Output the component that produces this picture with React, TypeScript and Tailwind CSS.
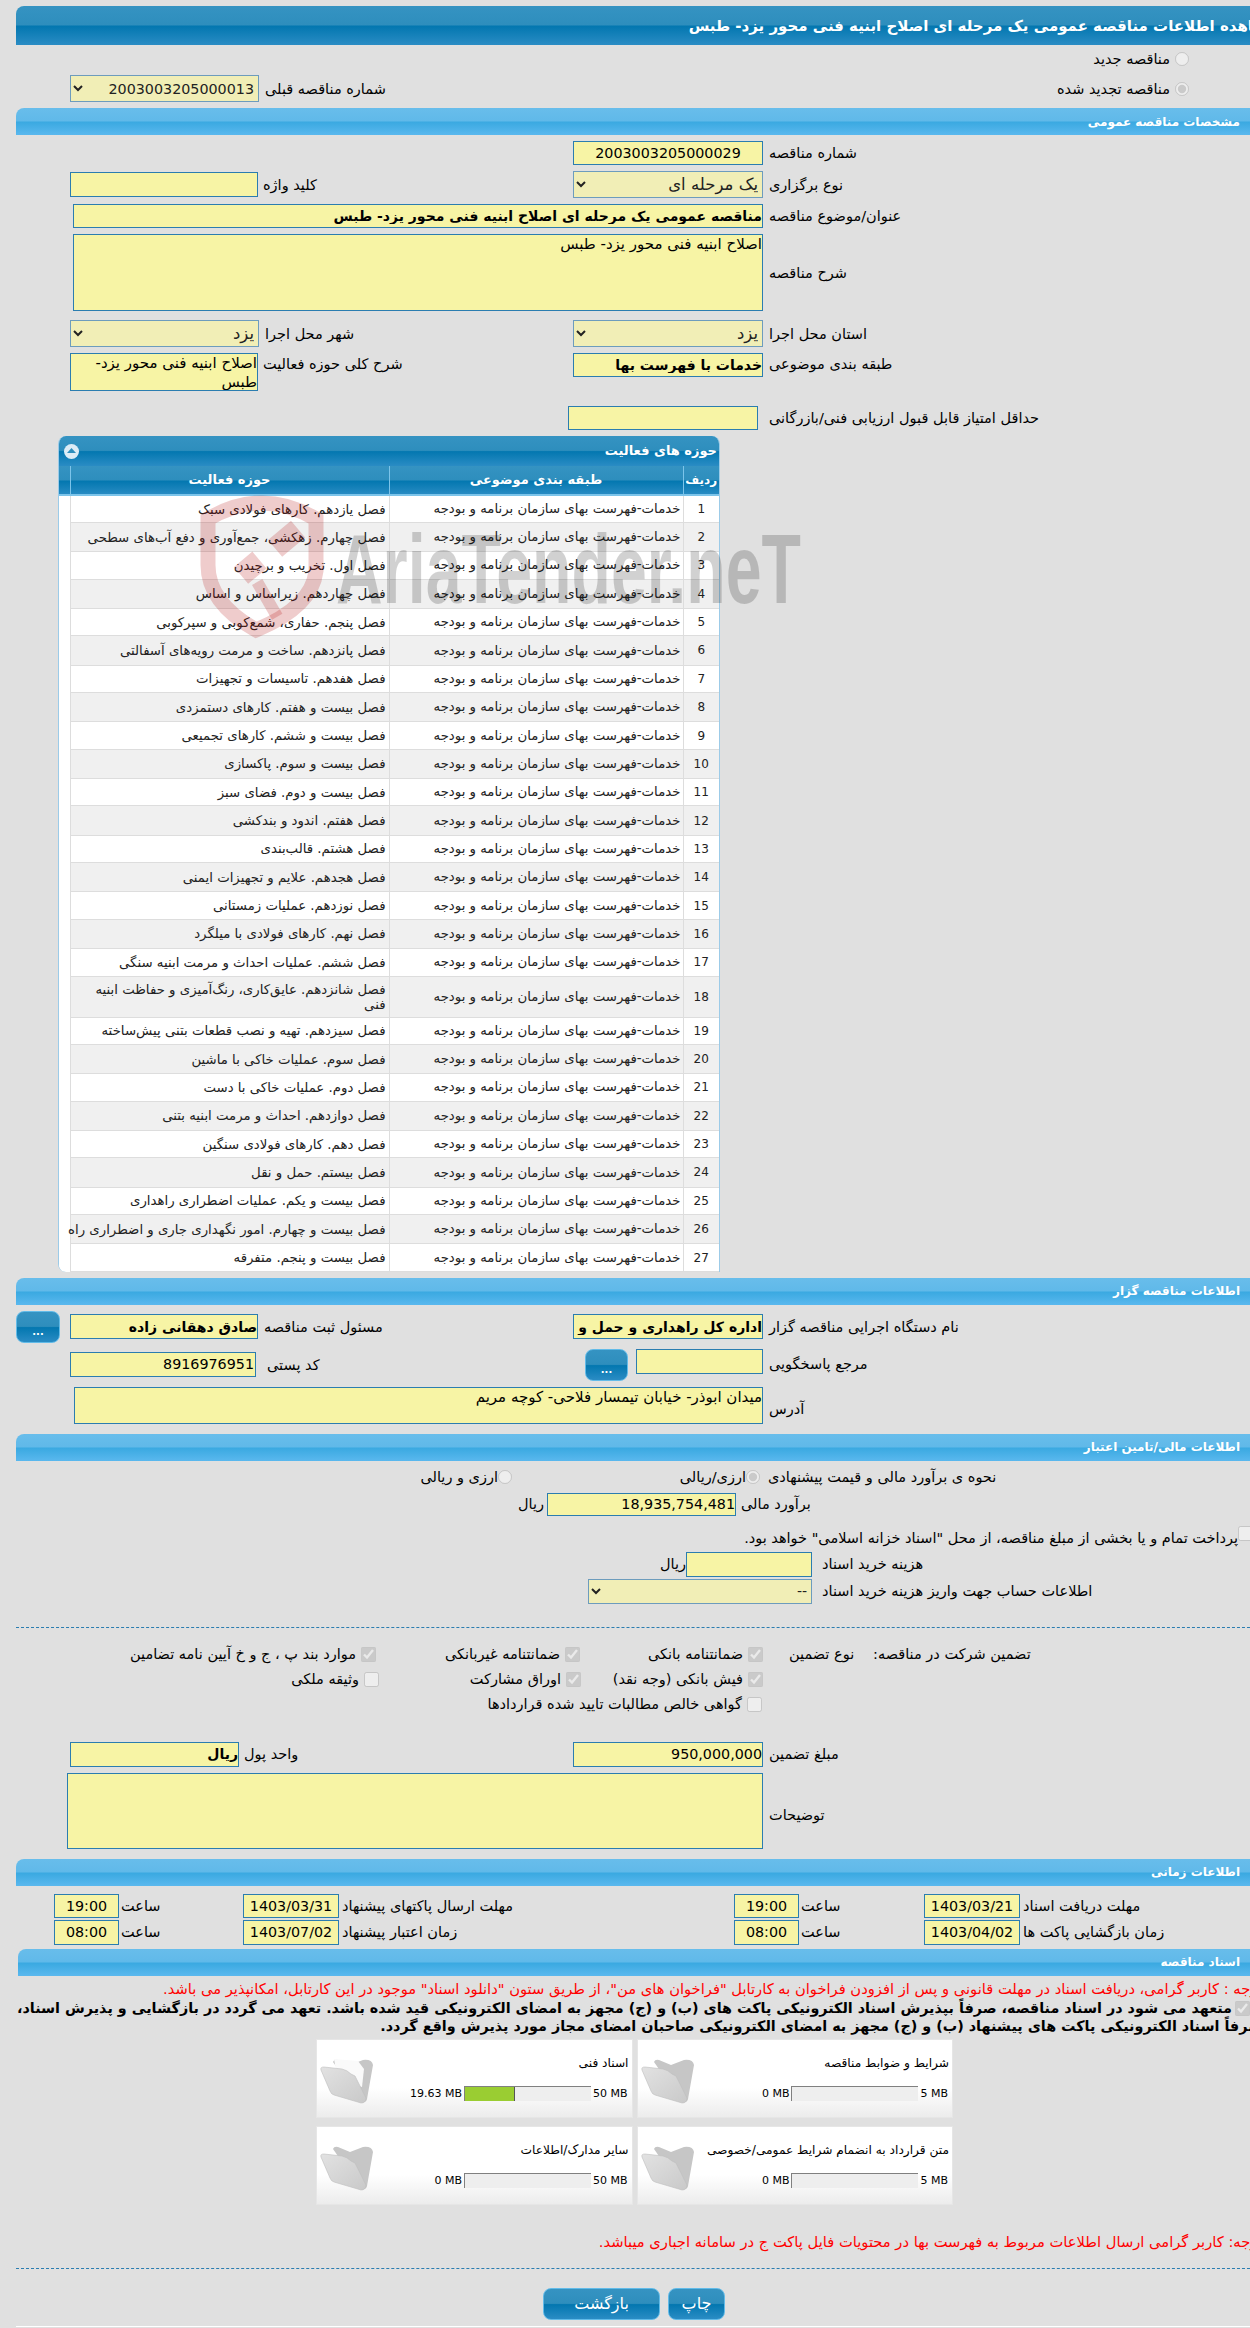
import React from 'react';

const darkBar = 'bg-[linear-gradient(to_bottom,#3593c2_0%,#2e8ebd_48%,#0377b0_52%,#2a8cc4_100%)]';
const lightBar = 'bg-[linear-gradient(to_bottom,#68bdeb_0%,#60b9e9_48%,#3aa9e1_52%,#5ab8ee_100%)]';
const field = 'border border-[#2b7db0] bg-[#f7f4a5] text-black outline-none';

const activities = [
    'فصل یازدهم. کارهای فولادی سبک',
    'فصل چهارم. زهکشی، جمع‌آوری و دفع آب‌های سطحی',
    'فصل اول. تخریب و برچیدن',
    'فصل چهاردهم. زیراساس و اساس',
    'فصل پنجم. حفاری، شمع‌کوبی و سپرکوبی',
    'فصل پانزدهم. ساخت و مرمت رویه‌های آسفالتی',
    'فصل هفدهم. تاسیسات و تجهیزات',
    'فصل بیست و هفتم. کارهای دستمزدی',
    'فصل بیست و ششم. کارهای تجمیعی',
    'فصل بیست و سوم. پاکسازی',
    'فصل بیست و دوم. فضای سبز',
    'فصل هفتم. اندود و بندکشی',
    'فصل هشتم. قالب‌بندی',
    'فصل هجدهم. علایم و تجهیزات ایمنی',
    'فصل نوزدهم. عملیات زمستانی',
    'فصل نهم. کارهای فولادی با میلگرد',
    'فصل ششم. عملیات احداث و مرمت ابنیه سنگی',
    'فصل شانزدهم. عایق‌کاری، رنگ‌آمیزی و حفاظت ابنیه فنی',
    'فصل سیزدهم. تهیه و نصب قطعات بتنی پیش‌ساخته',
    'فصل سوم. عملیات خاکی با ماشین',
    'فصل دوم. عملیات خاکی با دست',
    'فصل دوازدهم. احداث و مرمت ابنیه بتنی',
    'فصل دهم. کارهای فولادی سنگین',
    'فصل بیستم. حمل و نقل',
    'فصل بیست و یکم. عملیات اضطراری راهداری',
    'فصل بیست و چهارم. امور نگهداری جاری و اضطراری راه',
    'فصل بیست و پنجم. متفرقه',
];

const SectionBar = ({ title, className }: { title: string; className: string }) => (
    <div className={`${lightBar} ${className} flex items-center justify-end rounded-tl-lg rounded-tr-lg pr-[30px] text-[12px] font-bold text-white`} dir="ltr">
        <span dir="rtl">{title}</span>
    </div>
);

const Label = ({ children, className }: { children: React.ReactNode; className: string }) => (
    <span dir="rtl" className={`${className} block shrink-0 whitespace-nowrap text-left text-[14.5px] leading-[18px] text-black`}>
        {children}
    </span>
);

const TextBox = ({ value, className }: { value: string; className: string }) => (
    <input readOnly dir="rtl" value={value} className={`${field} ${className} block shrink-0 px-0`} />
);

const Area = ({ value, className }: { value: string; className: string }) => (
    <textarea readOnly dir="rtl" value={value} className={`${field} ${className} block shrink-0 resize-none p-0 text-[15px] leading-[19px]`} />
);

const Pick = ({ value, className }: { value: string; className: string }) => (
    <select disabled dir="rtl" value={value} onChange={() => undefined} className={`${className} block shrink-0 border border-[#6d9cbd] bg-[#f1eeb6] text-[#222222] outline-none`}>
        <option value={value}>{value}</option>
    </select>
);

const Check = ({ checked, className }: { checked?: boolean; className?: string }) => (
    <input type="checkbox" disabled readOnly checked={!!checked} className={`block h-[15px] w-[15px] shrink-0 ${className ?? ''}`} />
);

const Radio = ({ checked }: { checked?: boolean }) => (
    <input type="radio" disabled readOnly checked={!!checked} className="block h-[14px] w-[14px] shrink-0" />
);

const DotsButton = ({ className }: { className: string }) => (
    <button className={`${darkBar} ${className} flex shrink-0 items-end justify-center rounded-lg border border-[#62bbe8] pb-[5px] text-[10px] font-bold leading-[10px] text-white`}>
        ...
    </button>
);

const Folder = ({ open }: { open?: boolean }) => (
    <svg width="56" height="48" viewBox="0 0 56 48" className="mt-[17px] ml-[3px] shrink-0">
        <defs>
            <linearGradient id="folderFront" x1="0" y1="0" x2="1" y2="1">
                <stop offset="0" stopColor="#e2e2e2" />
                <stop offset="1" stopColor="#c9c9c9" />
            </linearGradient>
        </defs>
        <path d="M13 5 Q14 2 18 3 L30 8 L43 3 Q52 2 53 8 L47 42 Q46 46 41 45 Z" fill="#c6c6c6" />
        {open && <path d="M14 2 L38 4 L44 12 L42 30 L18 24 Z" fill="#fafafa" />}
        <path d="M1 13 Q0 10 4 10 L22 12 Q27 13 31 17 L35 19 L46 41 Q46 46 41 46 L14 38 Q11 37 10 34 Z" fill="url(#folderFront)" stroke="#bdbdbd" strokeWidth="0.6" />
    </svg>
);

const DocCard = ({ title, max, used, percent, open }: { title: string; max: string; used: string; percent: number; open?: boolean }) => (
    <div className="flex h-[79px] border border-[#e6e6e6] bg-[linear-gradient(to_bottom,#ffffff_0%,#ffffff_62%,#ececec_100%)]" dir="ltr">
        <Folder open={open} />
        <div className="flex flex-1 flex-col items-end pr-[3px]">
            <span dir="rtl" className="mt-[15px] h-[16px] text-[12.2px] leading-[16px] whitespace-nowrap text-black">{title}</span>
            <div className="mt-[15px] flex h-[15px] items-center text-[11px] leading-[15px] text-black">
                <span className="mr-[2px]">{used}</span>
                <div className="h-[15px] w-[127px] border-t border-l border-[#808080] bg-[#eeeeee]">
                    {percent > 0 && <div className="h-full border-r border-[#555555] bg-[#9acd32]" style={{ width: `${percent}%` }} />}
                </div>
                <span className="ml-[2px] mr-[1px]">{max}</span>
            </div>
        </div>
    </div>
);

const Watermark = () => (
    <svg width="620" height="150" viewBox="0 0 620 150" className="pointer-events-none absolute top-[495px] left-[190px]">
        <path d="M18 24 Q72 -8 126 24 L126 76 Q122 112 66 135 Q18 108 18 70 Z" fill="none" stroke="#b00000" strokeOpacity="0.2" strokeWidth="15" />
        <rect x="78" y="45" width="30" height="22" transform="rotate(-40 78 45)" fill="#b00000" fillOpacity="0.2" />
        <rect x="44" y="72" width="24" height="22" transform="rotate(-40 44 72)" fill="#b00000" fillOpacity="0.2" />
        <rect x="62" y="90" width="12" height="40" transform="rotate(-30 62 90)" fill="#b00000" fillOpacity="0.2" />
        <text x="146" y="108" textLength="465" lengthAdjust="spacingAndGlyphs" fontFamily="'Liberation Sans', sans-serif" fontWeight="700" fontSize="98" fill="#000000" fillOpacity="0.18">
            AriaTender.neT
        </text>
    </svg>
);

export default function App() {
    return (
        <div dir="ltr" className="relative h-[2328px] w-[1250px] overflow-hidden bg-[#e0e0e0] font-['DejaVu_Sans',sans-serif] text-[12px] text-black">
            <div className="w-[1270px]">
                <div className={`${darkBar} mt-[6px] ml-[16px] flex h-[39px] w-[1262px] items-center justify-end rounded-tl-lg rounded-tr-lg pt-[1px] text-[15px] font-bold whitespace-nowrap text-white`}>
                    <span dir="rtl">مشاهده اطلاعات مناقصه عمومی یک مرحله ای اصلاح ابنیه فنی محور یزد- طبس</span>
                </div>

                <div className="mt-[6px] flex h-[15px] items-center justify-end gap-[5px] pr-[81px]">
                    <Label className="">مناقصه جدید</Label>
                    <Radio />
                </div>
                <div className="mt-[9px] flex h-[27px] items-center">
                    <Pick value="2003003205000013" className="ml-[70px] h-[27px] w-[189px] text-[14.3px]" />
                    <Label className="ml-[6px] w-[200px]">شماره مناقصه قبلی</Label>
                    <span className="flex-1" />
                    <Label className="mr-[5px]">مناقصه تجدید شده</Label>
                    <span className="mr-[81px]"><Radio checked /></span>
                </div>

                <SectionBar title="مشخصات مناقصه عمومی" className="mt-[6px] ml-[16px] h-[27px]" />

                <div className="mt-[6px] flex h-[24px] items-center">
                    <TextBox value="2003003205000029" className="ml-[573px] h-[24px] w-[190px] text-center text-[14.3px]" />
                    <Label className="ml-[6px]">شماره مناقصه</Label>
                </div>
                <div className="mt-[6px] flex h-[27px] items-center">
                    <TextBox value="" className="ml-[70px] h-[25px] w-[188px]" />
                    <Label className="ml-[5px] w-[310px]">کلید واژه</Label>
                    <Pick value="یک مرحله ای" className="h-[27px] w-[190px] text-[16.5px]" />
                    <Label className="ml-[6px]">نوع برگزاری</Label>
                </div>
                <div className="mt-[6px] flex h-[24px] items-center">
                    <TextBox value="مناقصه عمومی یک مرحله ای اصلاح ابنیه فنی محور یزد- طبس" className="ml-[73px] h-[24px] w-[690px] text-[14px] font-bold" />
                    <Label className="ml-[6px]">عنوان/موضوع مناقصه</Label>
                </div>
                <div className="mt-[6px] flex h-[77px] items-center">
                    <Area value="اصلاح ابنیه فنی محور یزد- طبس" className="ml-[73px] h-[77px] w-[690px]" />
                    <Label className="ml-[6px]">شرح مناقصه</Label>
                </div>
                <div className="mt-[9px] flex h-[27px] items-center">
                    <Pick value="یزد" className="ml-[70px] h-[27px] w-[189px] text-[16.5px]" />
                    <Label className="ml-[6px] w-[308px]">شهر محل اجرا</Label>
                    <Pick value="یزد" className="h-[27px] w-[190px] text-[16.5px]" />
                    <Label className="ml-[6px]">استان محل اجرا</Label>
                </div>
                <div className="mt-[6px] flex h-[38px] items-start">
                    <Area value="اصلاح ابنیه فنی محور یزد- طبس" className="ml-[70px] h-[38px] w-[188px]" />
                    <Label className="ml-[5px] mt-[2px] w-[310px]">شرح کلی حوزه فعالیت</Label>
                    <TextBox value="خدمات با فهرست بها" className="h-[24px] w-[190px] text-[14px] font-bold" />
                    <Label className="ml-[6px] mt-[2px]">طبقه بندی موضوعی</Label>
                </div>
                <div className="mt-[15px] flex h-[24px] items-center">
                    <TextBox value="" className="ml-[568px] h-[24px] w-[190px]" />
                    <Label className="ml-[11px]">حداقل امتیاز قابل قبول ارزیابی فنی/بازرگانی</Label>
                </div>

                <div className="mt-[6px] ml-[58px] w-[662px] overflow-hidden rounded-tl-lg rounded-tr-lg rounded-bl-lg border-r border-l border-[#9ccbe8] bg-white">
                    <div className={`${darkBar} flex h-[30px] items-center justify-between pr-[2px] pl-[5px] text-[13px] font-bold text-white`}>
                        <span className="flex h-[15px] w-[15px] items-center justify-center rounded-full bg-[#dcecf6]">
                            <svg width="9" height="6" viewBox="0 0 9 6"><path d="M4.5 0 L9 5 L0 5 Z" fill="#2e8ebd" /></svg>
                        </span>
                        <span dir="rtl">حوزه های فعالیت</span>
                    </div>
                    <table className="w-[660px] table-fixed border-collapse">
                        <colgroup>
                            <col className="w-[11px]" />
                            <col className="w-[319px]" />
                            <col className="w-[294px]" />
                            <col className="w-[36px]" />
                        </colgroup>
                        <thead>
                            <tr className={`${darkBar} h-[29px] text-[13px] font-bold text-white`}>
                                <th className="border-r border-b-2 border-[#7cc4ea]" />
                                <th dir="rtl" className="border-r border-b-2 border-[#7cc4ea] font-bold">حوزه فعالیت</th>
                                <th dir="rtl" className="border-r border-b-2 border-[#7cc4ea] font-bold">طبقه بندی موضوعی</th>
                                <th dir="rtl" className="border-b-2 border-[#7cc4ea] text-[12px] font-bold">ردیف</th>
                            </tr>
                        </thead>
                        <tbody>
                            {activities.map((text, i) => (
                                <tr key={i} className={i === 17 ? 'h-[41px] bg-[#f0f0f0]' : i % 2 === 0 ? 'h-[27.5px] bg-white' : 'h-[29.2px] bg-[#f0f0f0]'}>
                                    <td className="bg-white" />
                                    <td dir="rtl" className={`border-b border-l border-[#dddddd] pr-[3px] text-[13.3px] leading-[15px] text-[#222222] ${i === 17 ? '' : 'whitespace-nowrap'}`}>{text}</td>
                                    <td dir="rtl" className="border-b border-l border-[#dddddd] pr-[2px] text-[13.3px] whitespace-nowrap text-[#222222]">خدمات-فهرست بهای سازمان برنامه و بودجه</td>
                                    <td className="border-b border-l border-[#dddddd] text-center text-[12px] text-[#222222]">{i + 1}</td>
                                </tr>
                            ))}
                        </tbody>
                    </table>
                </div>

                <SectionBar title="اطلاعات مناقصه گزار" className="mt-[6px] ml-[16px] h-[27px]" />

                <div className="mt-[6px] flex h-[32px] items-center">
                    <DotsButton className="ml-[16px] h-[32px] w-[44px]" />
                    <TextBox value="صادق دهقانی زاده" className="ml-[10px] h-[25px] w-[188px] text-[14px] font-bold" />
                    <Label className="ml-[6px] w-[309px]">مسئول ثبت مناقصه</Label>
                    <TextBox value="اداره کل راهداری و حمل و نقل جاده ای استان یزد" className="h-[25px] w-[190px] text-[14px] font-bold" />
                    <Label className="ml-[6px]">نام دستگاه اجرایی مناقصه گزار</Label>
                </div>
                <div className="mt-[6px] flex h-[32px] items-start">
                    <TextBox value="8916976951" className="mt-[3px] ml-[70px] h-[25px] w-[186px] pr-[1px] text-[14.3px]" />
                    <Label className="ml-[11px] mt-[7px] w-[318px]">کد پستی</Label>
                    <DotsButton className="h-[32px] w-[43px]" />
                    <TextBox value="" className="ml-[8px] h-[25px] w-[127px]" />
                    <Label className="ml-[6px] mt-[6px]">مرجع پاسخگویی</Label>
                </div>
                <div className="mt-[6px] flex h-[37px] items-center">
                    <Area value="میدان ابوذر- خیابان تیمسار فلاحی- کوچه مریم" className="ml-[74px] h-[37px] w-[689px]" />
                    <Label className="ml-[6px] mt-[8px]">آدرس</Label>
                </div>

                <SectionBar title="اطلاعات مالی/تامین اعتبار" className="mt-[10px] ml-[16px] h-[27px]" />

                <div className="mt-[8px] flex h-[16px] items-center">
                    <Label className="ml-[420px] w-[78px] !text-right">ارزی و ریالی</Label>
                    <Radio />
                    <Label className="ml-[164px] w-[70px] !text-right">ارزی/ریالی</Label>
                    <Radio checked />
                    <Label className="ml-[8px]">نحوه ی برآورد مالی و قیمت پیشنهادی</Label>
                </div>
                <div className="mt-[8px] flex h-[23px] items-center">
                    <Label className="ml-[518px] w-[29px]">ریال</Label>
                    <TextBox value="18,935,754,481" className="h-[23px] w-[189px] text-[14.3px]" />
                    <Label className="ml-[5px]">برآورد مالی</Label>
                </div>
                <div className="mt-[10px] flex h-[20px] items-start">
                    <Label className="ml-[725px] mt-[3px] w-[513px] !text-right">پرداخت تمام و یا بخشی از مبلغ مناقصه، از محل &quot;اسناد خزانه اسلامی&quot; خواهد بود.</Label>
                    <Check />
                </div>
                <div className="mt-[6px] flex h-[25px] items-center">
                    <Label className="ml-[662px] w-[24px]">ریال</Label>
                    <TextBox value="" className="h-[25px] w-[126px]" />
                    <Label className="ml-[10px]">هزینه خرید اسناد</Label>
                </div>
                <div className="mt-[2px] flex h-[25px] items-center">
                    <Pick value="--" className="ml-[588px] h-[25px] w-[224px] text-[14px]" />
                    <Label className="ml-[10px]">اطلاعات حساب جهت واریز هزینه خرید اسناد</Label>
                </div>

                <div className="mt-[23px] ml-[16px] border-t border-dashed border-[#2b7db0]" />

                <div className="mt-[19px] flex h-[15px] items-center">
                    <Label className="ml-[130px] w-[231px] pr-[5px] !text-right">موارد بند پ ، ج و خ آیین نامه تضامین</Label>
                    <Check checked />
                    <Label className="ml-[61px] w-[128px] pr-[5px] !text-right">ضمانتنامه غیربانکی</Label>
                    <Check checked />
                    <Label className="ml-[61px] w-[107px] pr-[5px] !text-right">ضمانتنامه بانکی</Label>
                    <Check checked />
                    <Label className="ml-[26px] w-[84px]">نوع تضمین</Label>
                    <Label className="w-[160px]">تضمین شرکت در مناقصه:</Label>
                </div>
                <div className="mt-[10px] flex h-[15px] items-center">
                    <Label className="ml-[287px] w-[77px] pr-[5px] !text-right">وثیقه ملکی</Label>
                    <Check />
                    <Label className="ml-[92px] w-[95px] pr-[5px] !text-right">اوراق مشارکت</Label>
                    <Check checked />
                    <Label className="ml-[25px] w-[142px] pr-[5px] !text-right">فیش بانکی (وجه نقد)</Label>
                    <Check checked />
                </div>
                <div className="mt-[10px] flex h-[15px] items-center">
                    <Label className="ml-[482px] w-[265px] pr-[5px] !text-right">گواهی خالص مطالبات تایید شده قراردادها</Label>
                    <Check />
                </div>

                <div className="mt-[30px] flex h-[25px] items-center">
                    <TextBox value="ریال" className="ml-[70px] h-[25px] w-[169px] text-[14px] font-bold" />
                    <Label className="ml-[5px] w-[329px]">واحد پول</Label>
                    <TextBox value="950,000,000" className="h-[25px] w-[190px] text-[14.3px]" />
                    <Label className="ml-[6px]">مبلغ تضمین</Label>
                </div>
                <div className="mt-[6px] flex h-[76px] items-center">
                    <Area value="" className="ml-[67px] h-[76px] w-[696px]" />
                    <Label className="ml-[6px] mt-[8px]">توضیحات</Label>
                </div>

                <SectionBar title="اطلاعات زمانی" className="mt-[10px] ml-[16px] h-[27px]" />

                <div className="mt-[8px] flex h-[24px] items-center">
                    <TextBox value="19:00" className="ml-[54px] h-[24px] w-[65px] text-center text-[14.3px]" />
                    <Label className="ml-[2px] w-[122px]">ساعت</Label>
                    <TextBox value="1403/03/31" className="h-[24px] w-[96px] text-center text-[14.3px]" />
                    <Label className="ml-[3px] w-[392px]">مهلت ارسال پاکتهای پیشنهاد</Label>
                    <TextBox value="19:00" className="h-[24px] w-[65px] text-center text-[14.3px]" />
                    <Label className="ml-[2px] w-[123px]">ساعت</Label>
                    <TextBox value="1403/03/21" className="h-[24px] w-[96px] text-center text-[14.3px]" />
                    <Label className="ml-[3px]">مهلت دریافت اسناد</Label>
                </div>
                <div className="mt-[2px] flex h-[25px] items-center">
                    <TextBox value="08:00" className="ml-[54px] h-[25px] w-[65px] text-center text-[14.3px]" />
                    <Label className="ml-[2px] w-[122px]">ساعت</Label>
                    <TextBox value="1403/07/02" className="h-[25px] w-[96px] text-center text-[14.3px]" />
                    <Label className="ml-[3px] w-[392px]">زمان اعتبار پیشنهاد</Label>
                    <TextBox value="08:00" className="h-[25px] w-[65px] text-center text-[14.3px]" />
                    <Label className="ml-[2px] w-[123px]">ساعت</Label>
                    <TextBox value="1403/04/02" className="h-[25px] w-[96px] text-center text-[14.3px]" />
                    <Label className="ml-[3px]">زمان بازگشایی پاکت ها</Label>
                </div>

                <SectionBar title="اسناد مناقصه" className="mt-[4px] ml-[18px] h-[27px]" />

                <div dir="rtl" className="mt-[4px] mr-[8px] h-[18px] text-[14.7px] leading-[18px] whitespace-nowrap text-[#ff0000]">
                    توجه : کاربر گرامی، دریافت اسناد در مهلت قانونی و پس از افزودن فراخوان به کارتابل &quot;فراخوان های من&quot;، از طریق ستون &quot;دانلود اسناد&quot; موجود در این کارتابل، امکانپذیر می باشد.
                </div>
                <div dir="rtl" className="mt-[1px] mr-[8px] h-[40px] text-[14.35px] leading-[18px] font-bold whitespace-nowrap text-black">
                    <div className="h-[18px]">
                        <input type="checkbox" disabled readOnly checked className="mr-[12px] ml-[3px] inline-block h-[15px] w-[15px] align-middle" />
                        متعهد می شود در اسناد مناقصه، صرفاً بپذیرش اسناد الکترونیکی پاکت های (ب) و (ج) مجهز به امضای الکترونیکی قید شده باشد. تعهد می گردد در بازگشایی و پذیرش اسناد،
                    </div>
                    <div className="h-[18px]">
                        صرفاً اسناد الکترونیکی پاکت های پیشنهاد (ب) و (ج) مجهز به امضای الکترونیکی صاحبان امضای مجاز مورد پذیرش واقع گردد.
                    </div>
                </div>

                <div className="ml-[316px] grid w-[637px] grid-cols-2 gap-x-[4px] gap-y-[8px]" dir="ltr">
                    <DocCard title="اسناد فنی" max="50 MB" used="19.63 MB" percent={40} open />
                    <DocCard title="شرایط و ضوابط مناقصه" max="5 MB" used="0 MB" percent={0} />
                    <DocCard title="سایر مدارک/اطلاعات" max="50 MB" used="0 MB" percent={0} />
                    <DocCard title="متن قرارداد به انضمام شرایط عمومی/خصوصی" max="5 MB" used="0 MB" percent={0} />
                </div>

                <div dir="rtl" className="mt-[28px] mr-[8px] h-[18px] text-[14.7px] leading-[18px] whitespace-nowrap text-[#ff0000]">
                    توجه: کاربر گرامی ارسال اطلاعات مربوط به فهرست بها در محتویات فایل پاکت ج در سامانه اجباری میباشد.
                </div>

                <div className="mt-[17px] ml-[16px] border-t border-dashed border-[#2b7db0]" />

                <div className="mt-[19px] flex h-[32px] gap-[8px] pl-[543px]">
                    <button className={`${darkBar} h-[32px] w-[117px] rounded-lg border border-[#62bbe8] text-[16px] text-white`}>بازگشت</button>
                    <button className={`${darkBar} h-[32px] w-[57px] rounded-lg border border-[#62bbe8] text-[16px] text-white`}>چاپ</button>
                </div>
                <div className="mt-[6px] ml-[16px] h-[1px] bg-white" />
            </div>
            <Watermark />
        </div>
    );
}
